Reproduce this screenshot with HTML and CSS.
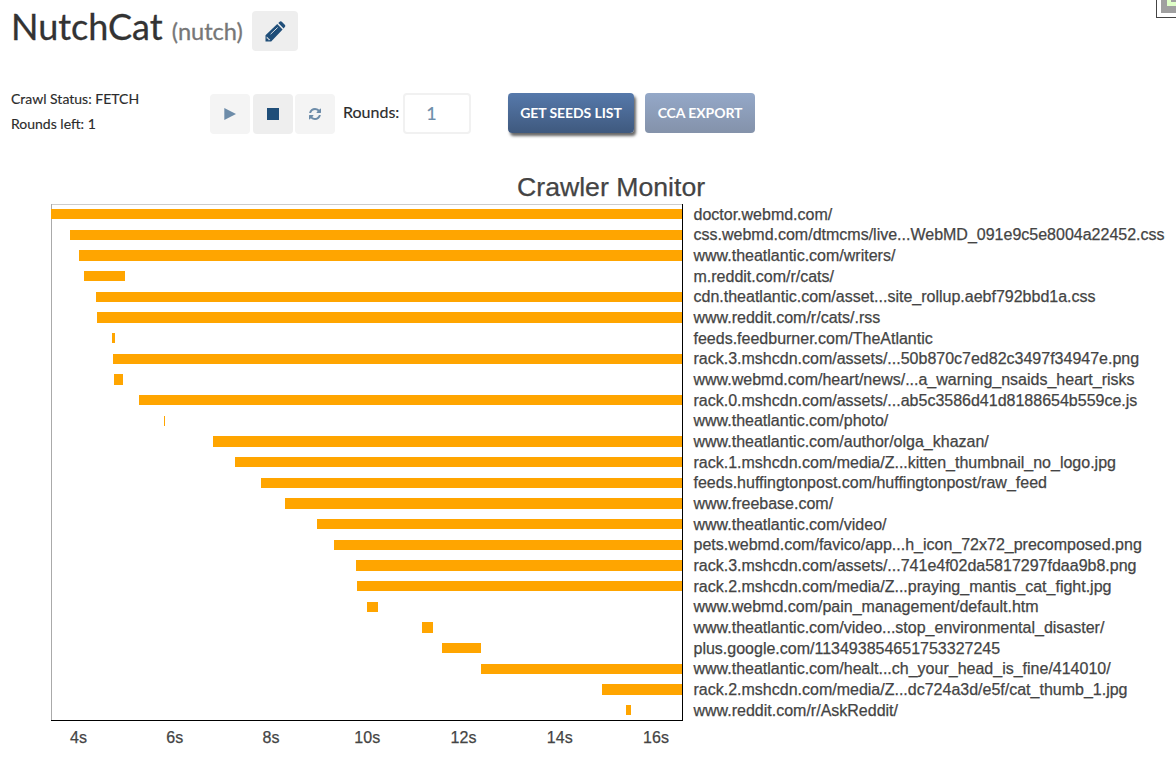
FILE: index.html
```html
<!DOCTYPE html>
<html lang="en">
<head>
<meta charset="utf-8">
<title>NutchCat</title>
<link rel="stylesheet" href="styles.css">
</head>
<body>
<div class="corner"><div class="corner-inner"><div class="corner-mark"></div></div></div>
<header class="header">
  <h1 class="title">NutchCat <small class="subtitle">(nutch)</small></h1>
  <button class="btn edit" aria-label="Edit">
    <svg width="21" height="21" viewBox="0 0 21 21"><path fill="#1f4e79" d="M.5 20.5V14.2L12.2 3L17.6 8.6L6.2 20.5ZM13.3 2L15 .6Q15.900 0 16.800.7L20 4Q20.700 4.900 20 5.800L18.600 7.600Z"/><path stroke="#eee" stroke-width=".9" fill="none" d="M5.600 13.200L12.600 6.500"/><path fill="#eee" d="M1.700 15.500L5.300 19.100L3.500 19.200L3.300 17.700L1.700 17.400Z"/></svg>
  </button>
</header>
<section class="controls">
  <div class="status"><p>Crawl Status: FETCH</p><p>Rounds left: 1</p></div>
  <div class="buttons">
    <button class="btn off" aria-label="Play"><svg width="12" height="12" viewBox="0 0 12 12"><path fill="#6d8ca9" d="M.3 0L12 6L.3 12Z"/></svg></button>
    <button class="btn" aria-label="Stop"><svg width="12" height="12" viewBox="0 0 12 12"><path fill="#1f4e79" d="M0 0H12V12H0Z"/></svg></button>
    <button class="btn off last" aria-label="Refresh"><svg width="12" height="12" viewBox="0 0 1536 1536"><path fill="#6d8ca9" d="M1511 928q0 5-1 7-64 268-268 434.500T764 1536q-146 0-282.500-55T238 1324l-129 129q-19 19-45 19t-45-19-19-45V960q0-26 19-45t45-19h448q26 0 45 19t19 45-19 45l-137 137q71 66 161 102t187 36q134 0 250-65t186-179q11-17 53-117 8-23 30-23h192q13 0 22.500 9.500t9.500 22.500zM1536 128v448q0 26-19 45t-45 19h-448q-26 0-45-19t-19-45 19-45l138-138Q969 256 768 256q-134 0-250 65T332 500q-11 17-53 117-8 23-30 23H50q-13 0-22.500-9.500T18 608v-7q65-268 270-434.500T768 0q146 0 284 55.500T1297 212l130-129q19-19 45-19t45 19 19 45z"/></svg></button>
  </div>
  <label class="rounds">Rounds: <span class="field">1</span></label>
  <button class="action primary">GET SEEDS LIST</button>
  <button class="action muted">CCA EXPORT</button>
</section>
<section class="chart">
  <h2 class="chart-title">Crawler Monitor</h2>
  <div class="plot" id="plot"></div>
  <div class="axis"><span>4s</span><span>6s</span><span>8s</span><span>10s</span><span>12s</span><span>14s</span><span>16s</span></div>
</section>
<script src="chart.js"></script>
</body>
</html>
```
FILE: styles.css
```css
* { box-sizing: border-box; }
body { margin: 0; width: 1176px; height: 759px; overflow: hidden; background: #fff; color: #2b2b2b; font-family: Lato, sans-serif; }
h1, h2, p { margin: 0; font-weight: 400; }
button { border: 0; padding: 0; font-family: inherit; }
.corner { position: absolute; top: 0; right: 0; width: 20px; height: 18px; padding-left: 4px; border-left: 1px solid #444; border-bottom: 1px solid #444; background: #fff; }
.corner-inner { height: 13px; padding-left: 6px; background: #a0a0a0; }
.corner-mark { height: 6px; border-left: 4px solid #dfffc8; border-bottom: 4px solid #dfffc8; }
.header { display: flex; align-items: flex-start; height: 93px; padding: 8px 0 0 11px; }
.title { width: 241px; font-size: 36px; line-height: 36px; white-space: nowrap; color: #333; -webkit-text-stroke: .3px; }
.subtitle { font-size: 23.6px; color: #777; }
.btn { display: flex; align-items: center; justify-content: center; width: 40px; height: 40px; border-radius: 4px; background: #eee; }
.off { background: #f4f4f4; }
.last { margin-left: -1px; }
.edit { width: 46px; height: 40px; margin-top: 3px; }
.controls { display: flex; align-items: flex-start; height: 77px; padding-left: 11px; }
.status { width: 199px; margin-top: -7px; font-size: 14px; line-height: 25px; -webkit-text-stroke: .15px; }
.buttons { display: flex; gap: 3px; padding-top: 1px; width: 133px; }
.rounds { display: flex; width: 165px; gap: 4px; font-size: 16px; line-height: 38px; -webkit-text-stroke: .15px; }
.field { width: 68px; height: 41px; padding-left: 21px; border: 2px solid #f1f1f1; border-radius: 4px; font-size: 18px; line-height: 37px; color: #6d8ca9; }
.action { height: 40px; padding-bottom: 2px; border-radius: 4px; color: #fff; font-size: 14px; font-weight: 700; letter-spacing: -.08px; }
.primary { width: 126px; margin-right: 11px; background: linear-gradient(#5679ab, #3f597e); box-shadow: 2px 3px 3px rgba(0,0,0,.6); }
.muted { width: 110px; background: linear-gradient(#94a8c8, #8492aa); }
.chart { font-family: "Liberation Sans", Arial, sans-serif; color: #444; -webkit-text-stroke: .25px; }
.chart-title { padding-left: 517px; height: 34px; font-size: 26.67px; line-height: 34px; white-space: nowrap; }
.plot { height: 517px; margin-left: 51px; background: linear-gradient(#000,#000) 0 100%/632px 1px no-repeat, linear-gradient(#000,#000) 631px 0/1px 100% no-repeat, linear-gradient(#aaa,#aaa) 0 0/1px 100% no-repeat, linear-gradient(#ccc,#ccc) 0 0/632px 1px no-repeat; }
.row { display: flex; align-items: center; height: 20.667px; }
.track { flex: none; width: 642.5px; }
.bar { display: block; height: 10.33px; background: orange; }
.label { padding-top: 1px; font-size: 16px; line-height: 20px; white-space: nowrap; }
.axis { display: flex; padding-left: 30.4px; font-size: 16px; line-height: 34px; }
.axis span { width: 96.25px; text-align: center; }
```
FILE: chart.js
```js
// Each entry: bar start and end in plot pixels, then the fetched address.
const rows = [
  [0, 631, "doctor.webmd.com/"],
  [19.3, 631, "css.webmd.com/dtmcms/live...WebMD_091e9c5e8004a22452.css"],
  [27.9, 631, "www.theatlantic.com/writers/"],
  [33.2, 74.4, "m.reddit.com/r/cats/"],
  [44.8, 631, "cdn.theatlantic.com/asset...site_rollup.aebf792bbd1a.css"],
  [46.4, 631, "www.reddit.com/r/cats/.rss"],
  [61.3, 64.4, "feeds.feedburner.com/TheAtlantic"],
  [62, 631, "rack.3.mshcdn.com/assets/...50b870c7ed82c3497f34947e.png"],
  [63.4, 72.4, "www.webmd.com/heart/news/...a_warning_nsaids_heart_risks"],
  [88.4, 631, "rack.0.mshcdn.com/assets/...ab5c3586d41d8188654b559ce.js"],
  [113, 114.4, "www.theatlantic.com/photo/"],
  [162.4, 631, "www.theatlantic.com/author/olga_khazan/"],
  [184, 631, "rack.1.mshcdn.com/media/Z...kitten_thumbnail_no_logo.jpg"],
  [209.7, 631, "feeds.huffingtonpost.com/huffingtonpost/raw_feed"],
  [234, 631, "www.freebase.com/"],
  [266.4, 631, "www.theatlantic.com/video/"],
  [283.3, 631, "pets.webmd.com/favico/app...h_icon_72x72_precomposed.png"],
  [305, 631, "rack.3.mshcdn.com/assets/...741e4f02da5817297fdaa9b8.png"],
  [306, 631, "rack.2.mshcdn.com/media/Z...praying_mantis_cat_fight.jpg"],
  [316.4, 327.4, "www.webmd.com/pain_management/default.htm"],
  [371, 382, "www.theatlantic.com/video...stop_environmental_disaster/"],
  [391.3, 430.4, "plus.google.com/113493854651753327245"],
  [430, 631, "www.theatlantic.com/healt...ch_your_head_is_fine/414010/"],
  [551, 631, "rack.2.mshcdn.com/media/Z...dc724a3d/e5f/cat_thumb_1.jpg"],
  [575, 579.7, "www.reddit.com/r/AskReddit/"]
];
const plot = document.getElementById("plot");
for (const [start, end, name] of rows) {
  const row = document.createElement("div");
  row.className = "row";
  row.innerHTML = `<span class="track"><span class="bar" style="margin-left:${start}px;width:${end - start}px"></span></span><span class="label">${name}</span>`;
  plot.append(row);
}
```
